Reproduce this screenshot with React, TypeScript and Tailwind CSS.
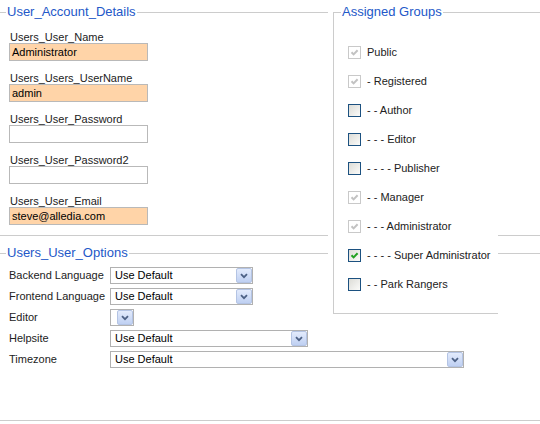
import React from 'react';

type CbState = 'locked' | 'off' | 'on';

const GROUPS: { label: string; state: CbState }[] = [
  { label: 'Public', state: 'locked' },
  { label: '- Registered', state: 'locked' },
  { label: '- - Author', state: 'off' },
  { label: '- - - Editor', state: 'off' },
  { label: '- - - - Publisher', state: 'off' },
  { label: '- - Manager', state: 'locked' },
  { label: '- - - Administrator', state: 'locked' },
  { label: '- - - - Super Administrator', state: 'on' },
  { label: '- - Park Rangers', state: 'off' },
];

const ACCOUNT_FIELDS = [
  { label: 'Users_User_Name', value: 'Administrator', filled: true },
  { label: 'Users_Users_UserName', value: 'admin', filled: true },
  { label: 'Users_User_Password', value: '', filled: false },
  { label: 'Users_User_Password2', value: '', filled: false },
  { label: 'Users_User_Email', value: 'steve@alledia.com', filled: true },
];

function Checkbox({ state }: { state: CbState }) {
  const box =
    state === 'locked'
      ? 'border-[#c9c9c9] bg-white'
      : 'border-[#1c5180] bg-gradient-to-br from-[#dcdcd7] to-[#fbfbf9]';
  return (
    <span className={`flex h-[13px] w-[13px] shrink-0 items-center justify-center border ${box}`}>
      {state !== 'off' && (
        <svg width="9" height="9" viewBox="0 0 9 9">
          <path
            d="M1.5 4.2 L3.6 6.4 L7.6 2.2"
            fill="none"
            stroke={state === 'on' ? '#21a121' : '#c2c2c2'}
            strokeWidth="2"
          />
        </svg>
      )}
    </span>
  );
}

function SelectBox({ width, value }: { width: string; value: string }) {
  return (
    <div className={`flex h-[17px] items-center border border-[#b1b1b1] bg-white ${width}`}>
      <span className="flex-1 overflow-hidden whitespace-nowrap pl-[4px] text-[11px] leading-[15px] text-black">
        {value}
      </span>
      <span className="flex h-[15px] w-[16px] shrink-0 items-center justify-center rounded-[2px] border border-[#b4c4e4] bg-gradient-to-b from-[#e3ebfc] to-[#bfd0f2]">
        <svg width="8" height="6" viewBox="0 0 8 6">
          <path d="M1 1.2 L4 4.2 L7 1.2" fill="none" stroke="#4d6185" strokeWidth="1.8" />
        </svg>
      </span>
    </div>
  );
}

function Legend({ children }: { children: React.ReactNode }) {
  return (
    <div className="flex h-[24px] items-center">
      <div className="h-px w-[6px] bg-[#cccccc]" />
      <span className="px-[1px] text-[13px] leading-[16px] text-[#2358c8]">{children}</span>
      <div className="h-px flex-1 bg-[#cccccc]" />
    </div>
  );
}

export default function App() {
  return (
    <div
      className="relative h-[424px] w-[540px] overflow-hidden bg-white text-[#222]"
      style={{ fontFamily: '"Liberation Sans", Arial, sans-serif' }}
    >
      {/* Account details */}
      <div className="border-b border-[#cccccc]">
        <Legend>User_Account_Details</Legend>
        <div className="flex flex-col gap-[11px] pb-[10px] pl-[9px] pt-[7px]">
          {ACCOUNT_FIELDS.map((f) => (
            <div key={f.label} className="flex flex-col">
              <span className="pl-[1px] text-[11px] leading-[12px] text-[#222]">{f.label}</span>
              <div
                className={`h-[18px] w-[139px] border border-[#b9b9b9] pl-[2px] text-[11px] leading-[16px] text-black ${
                  f.filled ? 'bg-[#ffd4a8]' : 'bg-white'
                }`}
              >
                {f.value}
              </div>
            </div>
          ))}
        </div>
      </div>

      {/* Options */}
      <div className="mt-[5px] h-[180px] border-b border-[#cccccc]">
        <Legend>Users_User_Options</Legend>
        <div className="flex flex-col">
          {[
            { label: 'Backend Language', width: 'w-[143px]', value: 'Use Default' },
            { label: 'Frontend Language', width: 'w-[143px]', value: 'Use Default' },
            { label: 'Editor', width: 'w-[24px]', value: '' },
            { label: 'Helpsite', width: 'w-[198px]', value: 'Use Default' },
            { label: 'Timezone', width: 'w-[354px]', value: 'Use Default' },
          ].map((row) => (
            <div key={row.label} className="flex h-[21px] items-center">
              <span className="w-[110px] shrink-0 pl-[9px] text-[11px] text-[#222]">{row.label}</span>
              <SelectBox width={row.width} value={row.value} />
            </div>
          ))}
        </div>
      </div>

      {/* Assigned groups panel, floated over the fieldset rules */}
      <div className="absolute left-[328px] top-0 w-[170px] bg-white pl-[5px]">
        <div className="mt-[12px] border-b border-l border-t border-[#cccccc] pb-[14px]">
          <div className="-mt-[13px] flex h-[24px] items-center">
            <span className="ml-[7px] bg-white px-[1px] text-[13px] leading-[16px] text-[#2358c8]">
              Assigned Groups
            </span>
          </div>
          <div className="mt-[14px] flex flex-col pl-[14px]">
            {GROUPS.map((g) => (
              <div key={g.label} className="flex h-[29px] items-center gap-[6px]">
                <Checkbox state={g.state} />
                <span className="whitespace-nowrap text-[11px] text-[#222]">{g.label}</span>
              </div>
            ))}
          </div>
        </div>
      </div>
    </div>
  );
}
